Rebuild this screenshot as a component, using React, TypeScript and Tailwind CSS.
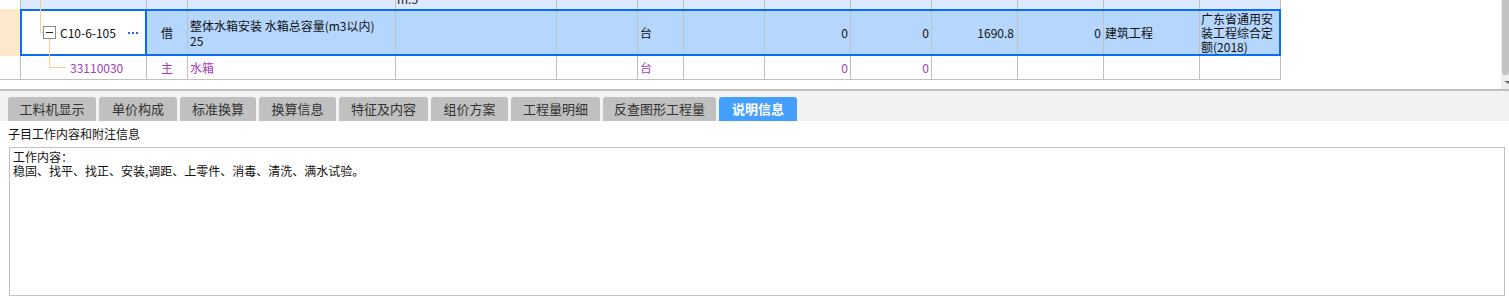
import React from "react";

const font = { fontFamily: '"Noto Sans CJK SC", "Noto Sans", sans-serif' };

const tabs = [
  { label: "工料机显示", w: "w-[88px]" },
  { label: "单价构成", w: "w-[78px]" },
  { label: "标准换算", w: "w-[76px]" },
  { label: "换算信息", w: "w-[77px]" },
  { label: "特征及内容", w: "w-[89px]" },
  { label: "组价方案", w: "w-[77px]" },
  { label: "工程量明细", w: "w-[89px]" },
  { label: "反查图形工程量", w: "w-[113px]" },
  { label: "说明信息", w: "w-[78px]", active: true },
];

// widths of cols 1..13 (after the 21px indicator column), right border included
const plainCols = [
  "w-[126px]",
  "w-[41px]",
  "w-[208px]",
  "w-[161px]",
  "w-[81px]",
  "w-[46px]",
  "w-[81px]",
  "w-[86px]",
  "w-[81px]",
  "w-[86px]",
  "w-[86px]",
  "w-[96px]",
  "w-[81px]",
];

function TreeLines() {
  return (
    <svg
      className="absolute left-0 top-0 pointer-events-none"
      width="80"
      height="80"
      viewBox="0 0 80 80"
    >
      <path d="M40.5 0 V32.5 H43" stroke="#f9cc96" strokeWidth="1" fill="none" />
      <path d="M49.5 39 V67.5 H66" stroke="#f9cc96" strokeWidth="1" fill="none" />
      <rect x="43.5" y="26.5" width="12" height="12" fill="#fff" stroke="#8c8c8c" />
      <path d="M46 32.5 H53" stroke="#222" strokeWidth="1" />
    </svg>
  );
}

function Dots() {
  return (
    <svg className="block" width="10" height="2" viewBox="0 0 10 2">
      <rect x="0" y="0" width="2" height="2" fill="#1f6fc8" />
      <rect x="4" y="0" width="2" height="2" fill="#1f6fc8" />
      <rect x="8" y="0" width="2" height="2" fill="#1f6fc8" />
    </svg>
  );
}

export default function App() {
  return (
    <div
      className="w-[1509px] h-[306px] bg-white text-[12px] text-[#111] overflow-hidden"
      style={font}
    >
      {/* Grid area */}
      <div className="h-[89px] flex">
        <div className="relative w-[1281px]">
          {/* row above, cut off */}
          <div className="flex h-[9px] overflow-hidden">
            <div className="w-[21px] shrink-0 bg-white border-r border-[#c0c0c0]" />
            {plainCols.map((w, i) => (
              <div
                key={i}
                className={`${w} shrink-0 bg-[#dde9fc] border-r border-[#c0c0c0] relative`}
              >
                {i === 3 && (
                  <span className="absolute left-[1px] bottom-[4px] leading-[12px] text-[#222]">
                    m.5
                  </span>
                )}
              </div>
            ))}
          </div>

          {/* selected row */}
          <div className="flex h-[47px]">
            <div className="w-[20px] shrink-0 bg-[#fde8cc]" />
            <div className="w-[1261px] shrink-0 flex border-2 border-[#0b6cf6]">
              <div className="w-[125px] shrink-0 bg-white border-r-2 border-[#0b6cf6] flex items-center pl-[38px] pr-[7px]">
                <span className="leading-[14px]">C10-6-105</span>
                <span className="ml-auto flex items-center">
                  <Dots />
                </span>
              </div>
              <div className="w-[41px] shrink-0 bg-[#b5d6fd] border-r border-[#c0c0c0] flex items-center justify-center">
                借
              </div>
              <div className="w-[208px] shrink-0 bg-[#b5d6fd] border-r border-[#c0c0c0] flex flex-col justify-center pl-[2px] leading-[15px]">
                <span>整体水箱安装 水箱总容量(m3以内)</span>
                <span>25</span>
              </div>
              <div className="w-[161px] shrink-0 bg-[#b5d6fd] border-r border-[#c0c0c0]" />
              <div className="w-[81px] shrink-0 bg-[#b5d6fd] border-r border-[#c0c0c0]" />
              <div className="w-[46px] shrink-0 bg-[#b5d6fd] border-r border-[#c0c0c0] flex items-center pl-[2px]">
                台
              </div>
              <div className="w-[81px] shrink-0 bg-[#b5d6fd] border-r border-[#c0c0c0]" />
              <div className="w-[86px] shrink-0 bg-[#b5d6fd] border-r border-[#c0c0c0] flex items-center justify-end pr-[2px]">
                0
              </div>
              <div className="w-[81px] shrink-0 bg-[#b5d6fd] border-r border-[#c0c0c0] flex items-center justify-end pr-[2px]">
                0
              </div>
              <div className="w-[86px] shrink-0 bg-[#b5d6fd] border-r border-[#c0c0c0] flex items-center justify-end pr-[3px]">
                1690.8
              </div>
              <div className="w-[86px] shrink-0 bg-[#b5d6fd] border-r border-[#c0c0c0] flex items-center justify-end pr-[2px]">
                0
              </div>
              <div className="w-[96px] shrink-0 bg-[#b5d6fd] border-r border-[#c0c0c0] flex items-center pl-[1px]">
                建筑工程
              </div>
              <div className="w-[79px] shrink-0 bg-[#b5d6fd] flex items-center pl-[1px] leading-[14px] break-all">
                广东省通用安装工程综合定额(2018)
              </div>
            </div>
          </div>

          {/* sub row */}
          <div className="flex h-[24px] border-b border-[#c0c0c0] text-[#a23db6]">
            <div className="w-[21px] shrink-0 bg-white border-r border-[#c0c0c0]" />
            <div className="w-[126px] shrink-0 border-r border-[#c0c0c0] flex items-center pl-[49px]">
              33110030
            </div>
            <div className="w-[41px] shrink-0 border-r border-[#c0c0c0] flex items-center justify-center">
              主
            </div>
            <div className="w-[208px] shrink-0 border-r border-[#c0c0c0] flex items-center pl-[2px]">
              水箱
            </div>
            <div className="w-[161px] shrink-0 border-r border-[#c0c0c0]" />
            <div className="w-[81px] shrink-0 border-r border-[#c0c0c0]" />
            <div className="w-[46px] shrink-0 border-r border-[#c0c0c0] flex items-center pl-[2px]">
              台
            </div>
            <div className="w-[81px] shrink-0 border-r border-[#c0c0c0]" />
            <div className="w-[86px] shrink-0 border-r border-[#c0c0c0] flex items-center justify-end pr-[2px]">
              0
            </div>
            <div className="w-[81px] shrink-0 border-r border-[#c0c0c0] flex items-center justify-end pr-[2px]">
              0
            </div>
            <div className="w-[86px] shrink-0 border-r border-[#c0c0c0]" />
            <div className="w-[86px] shrink-0 border-r border-[#c0c0c0]" />
            <div className="w-[96px] shrink-0 border-r border-[#c0c0c0]" />
            <div className="w-[81px] shrink-0 border-r border-[#c0c0c0]" />
          </div>

          <TreeLines />
        </div>

        <div className="flex-1" />

        {/* vertical scrollbar */}
        <div className="w-[8px] bg-[#eeeeee] flex flex-col items-end">
          <div className="w-[7px] h-[75px] bg-[#c2c2c2] rounded-b-[4px]" />
          <div className="mt-[6px] w-0 h-0 border-l-[5px] border-l-transparent border-t-[3px] border-t-[#666]" />
        </div>
      </div>

      <div className="h-[2px] bg-[#c0c0c0]" />

      {/* tab bar */}
      <div className="h-[30px] bg-[#f2f2f2] flex items-end gap-[3px] pl-[8px]">
        {tabs.map((t) => (
          <div
            key={t.label}
            className={`${t.w} h-[24px] rounded-t-[3px] flex items-center justify-center text-[13px] ${
              t.active
                ? "bg-[#45a0fd] text-white font-bold"
                : "bg-[#c0c0c0] text-[#333]"
            }`}
          >
            {t.label}
          </div>
        ))}
      </div>

      {/* description */}
      <div className="h-[26px] flex items-center pl-[8px] text-[#111]">
        子目工作内容和附注信息
      </div>
      <div className="ml-[9px] w-[1496px] h-[149px] border border-[#c0c0c0] px-[3px] pt-[2px] leading-[14px]">
        <div>工作内容：</div>
        <div>稳固、找平、找正、安装,调距、上零件、消毒、清洗、满水试验。</div>
      </div>
    </div>
  );
}
